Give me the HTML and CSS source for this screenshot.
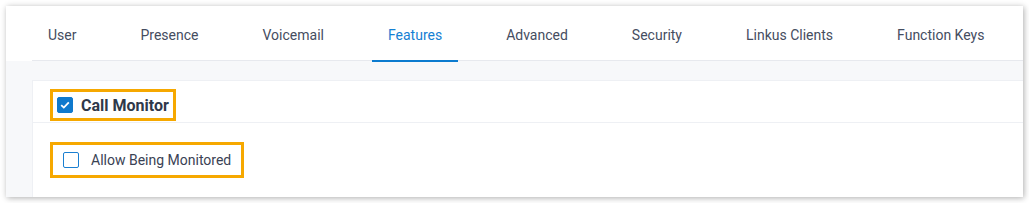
FILE: index.html
```html
<!DOCTYPE html>
<html lang="en">

<head>
    <meta charset="UTF-8">
    <meta name="viewport" content="width=device-width, initial-scale=1.0">
    <title>Extension Features</title>
    <link rel="stylesheet" href="styles.css">
</head>

<body>
    <div class="panel">
        <div class="tabs">
            <div class="tab">User</div>
            <div class="tab">Presence</div>
            <div class="tab">Voicemail</div>
            <div class="tab active">Features</div>
            <div class="tab">Advanced</div>
            <div class="tab">Security</div>
            <div class="tab">Linkus Clients</div>
            <div class="tab">Function Keys</div>
        </div>
        <div class="panel-body">
            <div class="card">
                <div class="card-header">
                    <label class="mark mark-title">
                        <span class="checkbox checked">
                            <svg width="10" height="8" viewBox="0 0 10 8">
                                <path d="M1.2 4.2 L3.8 6.6 L8.8 1.4" fill="none" stroke="#fff" stroke-width="1.8" />
                            </svg>
                        </span>
                        <span class="title">Call Monitor</span>
                    </label>
                </div>
                <div class="card-content">
                    <label class="mark mark-option">
                        <span class="checkbox"></span>
                        <span class="option">Allow Being Monitored</span>
                    </label>
                </div>
            </div>
        </div>
    </div>
</body>

</html>
```

FILE: styles.css
```css
body,
html {
    margin: 0;
    padding: 0;
    font-family: Roboto, "Liberation Sans", Arial, sans-serif;
    background: #fff;
}

body {
    padding: 6px;
}

.panel {
    width: 1017px;
    height: 191px;
    background: #fff;
    box-shadow: 1px 1px 6px rgba(0, 0, 0, 0.32);
    display: flex;
    flex-direction: column;
}

.tabs {
    display: flex;
    gap: 32px;
    margin-left: 26px;
    border-bottom: 1px solid #e7e9ee;
}

.tab {
    position: relative;
    padding: 19px 16px 15px;
    line-height: 20px;
    font-size: 14px;
    color: #454d5f;
}

.tab.active {
    color: #1580d3;
}

.tab.active::after {
    content: "";
    position: absolute;
    left: 0;
    right: 0;
    bottom: -2px;
    height: 2px;
    background: #0c7bcf;
}

.panel-body {
    flex: 1;
    background: #f7f8fa;
    padding: 19px 0 0 26px;
    display: flex;
}

.card {
    flex: 1;
    background: #fff;
    border-top: 1px solid #eef0f4;
    border-left: 1px solid #eef0f4;
}

.card-header {
    height: 42px;
    padding: 8px 0 0 17px;
    box-sizing: border-box;
    border-bottom: 1px solid #eef0f4;
}

.card-content {
    padding: 19px 0 0 17px;
}

.mark {
    display: inline-flex;
    align-items: center;
    border: 3px solid #f6a800;
}

.mark-title {
    height: 32px;
    box-sizing: border-box;
    padding: 0 4px;
    gap: 8px;
}

.mark-option {
    height: 36px;
    box-sizing: border-box;
    padding: 0 10px;
    gap: 12px;
}

.checkbox {
    width: 16px;
    height: 16px;
    box-sizing: border-box;
    border: 1px solid #1a7fd1;
    border-radius: 2px;
    background: #fff;
    display: flex;
    align-items: center;
    justify-content: center;
}

.checkbox.checked {
    background: #0f79cd;
    border-color: #0f79cd;
}

.title {
    font-size: 16px;
    font-weight: bold;
    color: #2f3849;
}

.option {
    font-size: 14px;
    color: #3a4254;
}
```
